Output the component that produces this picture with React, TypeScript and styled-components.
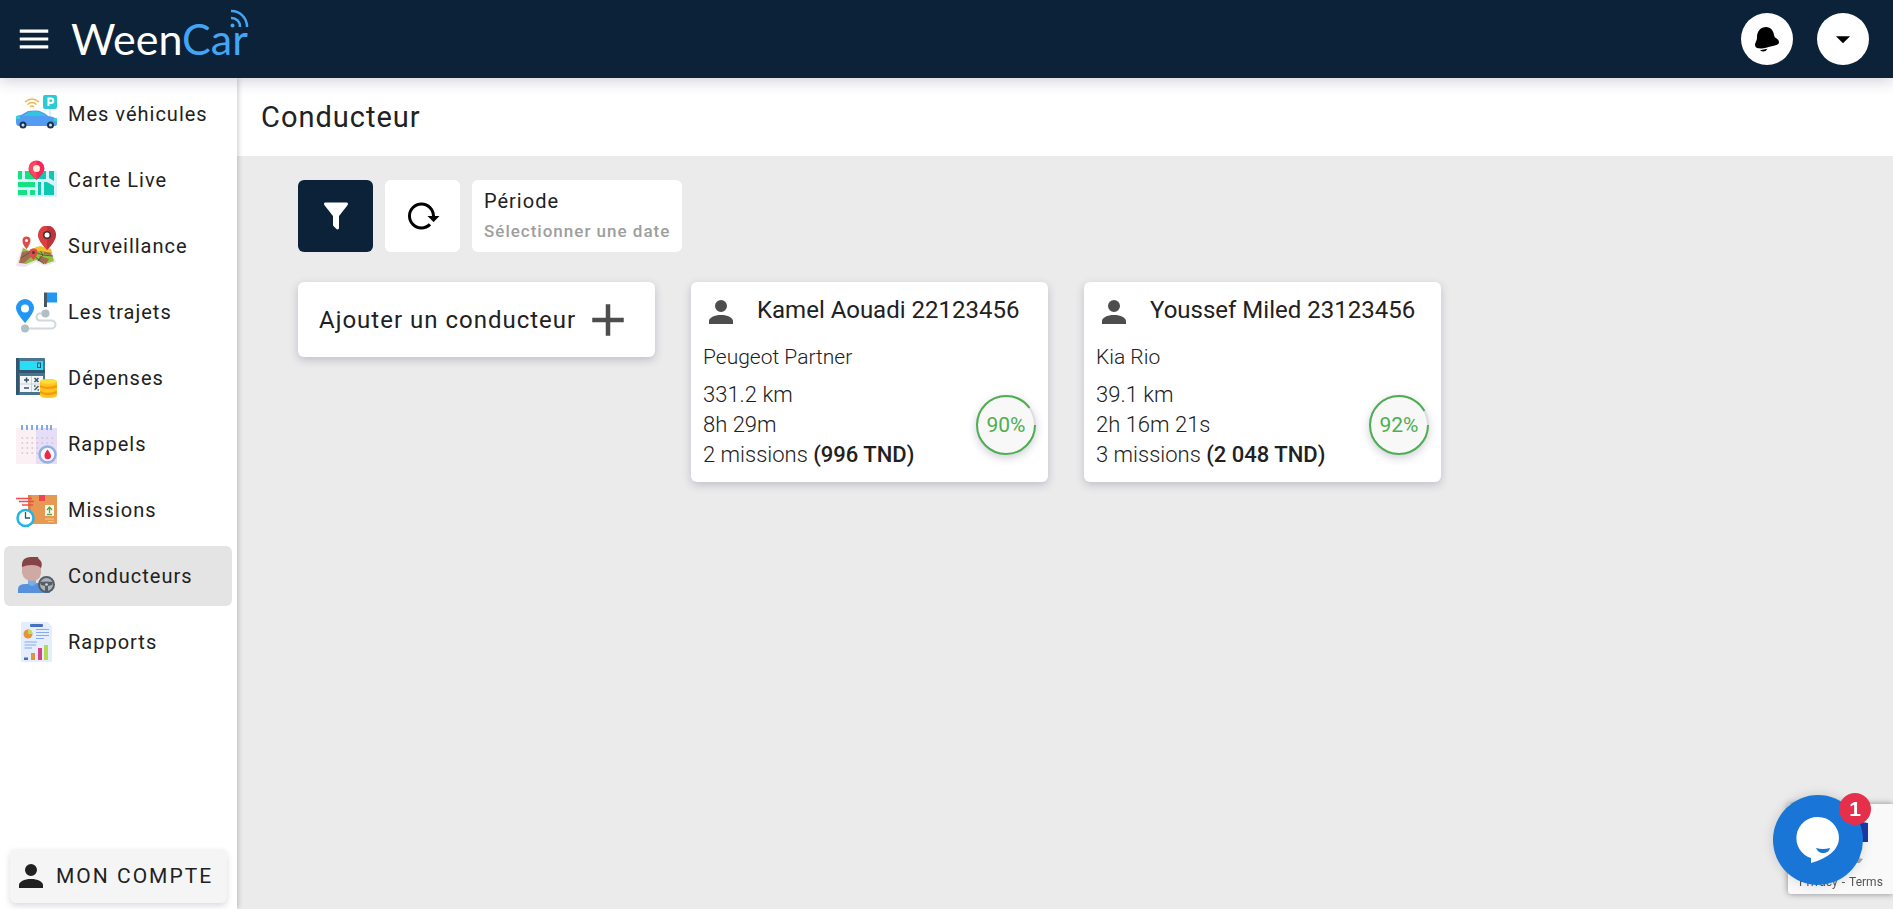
import React from "react";
import styled, { createGlobalStyle } from "styled-components";

const GlobalStyle = createGlobalStyle`
  *, *::before, *::after { box-sizing: border-box; }
  body { margin: 0; background: #ebebeb; color: #212121; font-family: Roboto, "Liberation Sans", sans-serif; }
  button { font: inherit; color: inherit; border: 0; padding: 0; cursor: pointer; letter-spacing: inherit; }
  a { color: inherit; text-decoration: none; }
  h1, h2, p, ul { margin: 0; padding: 0; }
  ul { list-style: none; }
  svg { display: block; flex: none; }
`;

const Page = styled.div`
  min-height: 100vh;
  display: flex;
  flex-direction: column;
`;

const Header = styled.header`
  height: 78px;
  flex: none;
  display: flex;
  align-items: center;
  padding: 0 24px 0 15px;
  background: #0c2238;
  color: #fff;
  box-shadow: 0 3px 14px rgba(60, 50, 100, 0.24);
  z-index: 3;
`;

const MenuButton = styled.button`
  background: none;
  margin-right: 18px;
`;

const Logo = styled.a`
  display: flex;
  align-items: center;
`;

const HeaderActions = styled.div`
  display: flex;
  gap: 24px;
  margin-left: auto;
`;

const RoundButton = styled.button`
  width: 52px;
  height: 52px;
  border-radius: 50%;
  background: #fff;
  color: #000;
  display: flex;
  align-items: center;
  justify-content: center;
`;

const Body = styled.div`
  flex: 1;
  display: flex;
`;

const Sidebar = styled.nav`
  width: 237px;
  flex: none;
  display: flex;
  flex-direction: column;
  justify-content: space-between;
  padding: 6px 5px 6px 4px;
  background: #fff;
  box-shadow: 1px 0 5px rgba(0, 0, 0, 0.22);
  z-index: 2;
`;

const NavList = styled.ul`
  display: flex;
  flex-direction: column;
  gap: 6px;
`;

const NavLink = styled.a<{ $active?: boolean }>`
  display: flex;
  align-items: center;
  gap: 11px;
  height: 60px;
  padding: 0 12px;
  border-radius: 6px;
  font-size: 20px;
  letter-spacing: 1px;
  background: ${(p) => (p.$active ? "#e4e4e4" : "transparent")};
`;

const AccountButton = styled.button`
  display: flex;
  align-items: center;
  gap: 7px;
  height: 54px;
  margin: 0 5px 0 6px;
  padding-left: 3px;
  border-radius: 6px;
  background: #f5f5f5;
  font-size: 21px;
  letter-spacing: 2px;
  box-shadow: 0 3px 6px rgba(60, 50, 100, 0.18);
`;

const Main = styled.main`
  flex: 1;
  min-width: 0;
`;

const TitleBar = styled.div`
  height: 78px;
  display: flex;
  align-items: center;
  padding: 0 24px;
  background: #fff;
`;

const Title = styled.h1`
  font-size: 29px;
  line-height: 36px;
  font-weight: 400;
  letter-spacing: 1px;
`;

const Content = styled.div`
  padding: 24px 61px;
`;

const Toolbar = styled.div`
  display: flex;
  gap: 12px;
  margin-bottom: 30px;
`;

const ToolButton = styled.button<{ $dark?: boolean }>`
  width: 75px;
  height: 72px;
  display: flex;
  align-items: center;
  justify-content: center;
  border-radius: 6px;
  background: ${(p) => (p.$dark ? "#0c2238" : "#fff")};
  color: ${(p) => (p.$dark ? "#fff" : "#000")};
`;

const PeriodButton = styled.button`
  height: 72px;
  padding: 0 12px;
  border-radius: 6px;
  background: #fff;
  text-align: left;
  font-size: 20px;
  line-height: 30px;
  letter-spacing: 1px;
`;

const PeriodHint = styled.span`
  display: block;
  color: #9e9e9e;
  font-size: 17px;
  font-weight: 500;
`;

const Cards = styled.div`
  display: flex;
  flex-wrap: wrap;
  align-items: flex-start;
  gap: 36px;
`;

const Card = styled.article`
  width: 357px;
  border-radius: 6px;
  background: #fff;
  box-shadow: 0 3px 8px rgba(60, 50, 100, 0.24);
  padding: 9px 12px 12px;
`;

const AddCard = styled.button`
  width: 357px;
  height: 75px;
  display: flex;
  align-items: center;
  gap: 5px;
  padding: 0 21px;
  border-radius: 6px;
  background: #fff;
  box-shadow: 0 3px 8px rgba(60, 50, 100, 0.24);
  font-size: 24px;
  letter-spacing: 1px;
  white-space: nowrap;
`;

const CardHead = styled.header`
  display: flex;
  align-items: center;
  gap: 18px;
  height: 42px;
`;

const DriverName = styled.h2`
  padding-bottom: 4px;
  font-size: 24px;
  line-height: 36px;
  font-weight: 400;
  white-space: nowrap;
`;

const Vehicle = styled.p`
  margin: 9px 0 8px;
  font-size: 21px;
  line-height: 30px;
  font-weight: 300;
`;

const CardBody = styled.div`
  display: flex;
  align-items: center;
  justify-content: space-between;
`;

const Stats = styled.div`
  font-size: 22px;
  line-height: 30px;
  font-weight: 300;

  strong { font-weight: 500; }
`;

const Ring = styled.div`
  position: relative;
  width: 60px;
  height: 60px;
  display: flex;
  align-items: center;
  justify-content: center;
  border-radius: 50%;
  background: #f8f8f8;
  color: #4caf50;
  font-size: 21px;
  box-shadow: 0 3px 8px rgba(60, 50, 100, 0.24);

  svg { position: absolute; inset: 0; }
`;

const Recaptcha = styled.aside`
  position: fixed;
  right: 0;
  bottom: 15px;
  width: 105px;
  height: 90px;
  display: flex;
  align-items: flex-end;
  padding: 0 0 4px 11px;
  border-radius: 3px 0 0 3px;
  background: #f9f9f9;
  box-shadow: 0 0 6px #888;
  color: #555;
  font-size: 12px;
  line-height: 16px;
  z-index: 4;

  svg { position: absolute; left: 50px; top: 15px; }
`;

const RecaptchaLinks = styled.div`
  display: flex;
  gap: 4px;
`;

const ChatButton = styled.button`
  position: fixed;
  right: 30px;
  bottom: 24px;
  width: 90px;
  height: 90px;
  border-radius: 50%;
  background: #1976d6;
  box-shadow: 0 0 12px rgba(0, 0, 0, 0.15);
  z-index: 5;
`;

const ChatBadge = styled.span`
  position: absolute;
  right: -8px;
  top: -2px;
  width: 32px;
  height: 32px;
  border-radius: 50%;
  background: #e62f4a;
  color: #fff;
  font: bold 21px/32px "Liberation Sans", sans-serif;
  letter-spacing: 0;
`;

const GLYPHS = {
  menu: "M3,6H21V8H3V6M3,11H21V13H3V11M3,16H21V18H3V16Z",
  down: "M7,10L12,15L17,10H7Z",
  filter:
    "M14,12V19.88C14.04,20.18 13.94,20.5 13.71,20.71C13.32,21.1 12.69,21.1 12.3,20.71L10.29,18.7C10.06,18.47 9.96,18.16 10,17.87V12H9.97L4.21,4.62C3.87,4.19 3.95,3.56 4.38,3.22C4.57,3.08 4.78,3 5,3H19C19.22,3 19.43,3.08 19.62,3.22C20.05,3.56 20.13,4.19 19.79,4.62L14.03,12H14Z",
  reload:
    "M2 12C2 16.97 6.03 21 11 21C13.39 21 15.68 20.06 17.4 18.4L15.9 16.9C14.63 18.25 12.86 19 11 19C4.76 19 1.64 11.46 6.05 7.05C10.46 2.64 18 5.77 18 12H15L19 16H19.1L23 12H20C20 7.03 15.97 3 11 3C6.03 3 2 7.03 2 12Z",
  account:
    "M12,4A4,4 0 0,1 16,8A4,4 0 0,1 12,12A4,4 0 0,1 8,8A4,4 0 0,1 12,4M12,14C16.42,14 20,15.79 20,18V20H4V18C4,15.79 7.58,14 12,14Z",
  plus: "M19,13H13V19H11V13H5V11H11V5H13V11H19V13Z",
};

function Glyph({ name, size = 36, color = "currentColor" }: { name: keyof typeof GLYPHS; size?: number; color?: string }) {
  return (
    <svg width={size} height={size} viewBox="0 0 24 24" fill={color} aria-hidden="true">
      <path d={GLYPHS[name]} />
    </svg>
  );
}

function WeenCarLogo() {
  return (
    <svg width="180" height="60" viewBox="0 0 180 60" role="img" aria-label="WeenCar">
      <text x="0" y="46" fontFamily="Lato, sans-serif" fontSize="43" fill="#fff">
        Ween<tspan fill="#42a5f5">Car</tspan>
      </text>
      <g fill="none" stroke="#42a5f5" strokeWidth="2.500">
        <path d="M160 2A15.500 15.500 0 0 1 176 18" />
        <path d="M160 9A8.500 8.500 0 0 1 169 18" />
      </g>
      <circle cx="161.500" cy="16.500" r="2" fill="#42a5f5" />
    </svg>
  );
}

function Bell() {
  return (
    <svg width="26" height="26" viewBox="0 0 26 26" aria-hidden="true">
      <path d="M3 11C3 5 7 1 12 1C17 1 19.500 5 20 9C20.500 13 25 12 25 16.500C25 19 20 19.500 13 21.500C8 23 2 23 1.200 20C.500 16.500 3 16 3 11Z" />
      <path d="M6 24.200Q10 23.800 13.500 22.800Q12 25.600 9.500 25.600Q7.500 25.600 6 24.200Z" />
    </svg>
  );
}

const ICONS: Record<string, React.ReactNode> = {
  vehicles: (
    <>
      <path d="M34 12V29" stroke="#b9d9f5" />
      <rect x="27" y="1" width="14" height="14" rx="2" fill="#2ccbd3" />
      <path d="M32.500 12V4.500H35a2 2 0 0 1 0 4.500H32.500" fill="none" stroke="#fff" strokeWidth="2" />
      <path d="M9 8Q16 2 23 8M11.500 10.500Q16 6.500 20.500 10.500M14 13Q16 11 18 13" fill="none" stroke="#f3b54a" strokeWidth="1.300" />
      <path d="M0 24Q0 21 5 21L11 17.500Q13 16.500 20 16.500Q26 16.500 32 22Q41 23 41 27V30Q41 32 38 32H3Q0 32 0 28Z" fill="#549bf2" />
      <path d="M7 22L12 18.500Q14 17.500 20 17.500Q25 17.500 30 22Z" fill="#32c6dd" />
      <path d="M0 22H4V25H0ZM38 24H41V27H38Z" fill="#3ad0df" />
      <circle cx="7" cy="31" r="3.500" fill="#17364d" /><circle cx="34.500" cy="31" r="3.500" fill="#17364d" />
      <circle cx="7" cy="31" r="1.500" fill="#cfe0ea" /><circle cx="34.500" cy="31" r="1.500" fill="#cfe0ea" />
    </>
  ),
  live: (
    <>
      <path d="M2 11H41V37H2Z" fill="#d9f2fb" />
      <path d="M2 11H6V19H2ZM9 11H19V19H9ZM2 22H19V27H2ZM2 30H11V35H2ZM14 30H19V35H14Z" fill="#12e27f" />
      <path d="M22 19V11H30V19ZM33 11H38V21L33 18ZM22 22H25V35H22ZM28 22H31L38 26V35H28Z" fill="#0dc9b4" />
      <path d="M20.500 20Q12 13 12.500 8.500A8 8 0 0 1 28.500 8.500Q28 14 20.500 20Z" fill="#f5285c" />
      <path d="M20.500 1A7.500 7.500 0 0 0 13 8.500Q14 14 20.500 19Z" fill="#fb4763" />
      <circle cx="20.500" cy="8.500" r="3.500" fill="#fff1d8" />
    </>
  ),
  surveillance: (
    <>
      <path d="M0 40L6 21L13 24L22 20L35 23L40 36L29 40L20 36L9 41Z" fill="#eee4ee" />
      <path d="M3 37L7 22L13 25L22 21L34 23L38 35L29 38L20 34L10 38Z" fill="#8fc23c" />
      <path d="M3 37L6 26L13 25L15 31L8 37ZM27 22L34 23L35 29L28 28ZM22 34L24 30L33 33L30 38Z" fill="#a56a52" />
      <path d="M5 32L16 25L27 29L37 30M13 25L18 30L28 38M22 21L27 29L22 35" fill="none" stroke="#5c5a46" />
      <path d="M13 24L25 25L36 27L35 23L24 20Z" fill="#f5bc2e" />
      <path d="M10.500 23Q6 18 6.500 14.500A4 4 0 0 1 14.500 14.500Q14.500 18 10.500 23Z" fill="#dc4d49" />
      <path d="M17.500 34Q13 29.500 13.500 26.500A4 4 0 0 1 21.500 26.500Q21.500 29.500 17.500 34Z" fill="#dc4d49" />
      <path d="M31 24Q21 14 22 8.500A9 9 0 0 1 40 8.500Q40 15 31 24Z" fill="#db403f" />
      <path d="M31 24Q40 15 40 8.500A9 9 0 0 0 31 0Z" fill="#bd3439" />
      <circle cx="31" cy="9" r="4" fill="#3d3034" /><circle cx="31" cy="9" r="2.500" fill="#fff" />
      <circle cx="10.500" cy="14.500" r="1.500" fill="#fff" /><circle cx="17.500" cy="26.500" r="1.500" fill="#60303a" />
    </>
  ),
  trips: (
    <>
      <path d="M9 36.500H35.500A4 4 0 0 0 35.500 28.500H23A3.700 3.700 0 0 1 23 21.500H29" fill="none" stroke="#cfd8dc" strokeWidth="2" />
      <circle cx="9" cy="36.500" r="4" fill="#b0bec5" /><circle cx="29.500" cy="21.500" r="4" fill="#b0bec5" />
      <path d="M9 31Q0 21 0 16A9 9 0 0 1 18 16Q18 21 9 31Z" fill="#2196f3" />
      <circle cx="9" cy="16.500" r="4" fill="#fff" />
      <path d="M28 .500H31V15H28Z" fill="#455a64" /><path d="M31 .500H41V10.500H31Z" fill="#2196f3" />
    </>
  ),
  expenses: (
    <>
      <rect x="0" y="0" width="29" height="37" rx="1" fill="#477693" />
      <path d="M0 0H3V37H0ZM0 12H29V15H0Z" fill="#31566e" />
      <path d="M4 3H27V12H4Z" fill="#2bdcf7" />
      <rect x="21.500" y="5" width="3" height="4.500" fill="none" stroke="#285069" />
      <path d="M4 18H27V34H4Z" fill="#f3f5f7" />
      <path d="M15.500 18V34M4 26H27" stroke="#c5d4dd" />
      <path d="M8 22H13M10.500 19.500V24.500M8 30H13M18.500 20L22.500 24M22.500 20L18.500 24M18.500 32L22.500 28M18 28H19.500M21.500 32H23" stroke="#37546b" strokeWidth="1.500" fill="none" />
      <path d="M24 24Q24 21 32.500 21T41 24V37Q41 40 32.500 40T24 37Z" fill="#fec51c" />
      <path d="M24 28Q32 32 41 28M24 34Q32 38 41 34" fill="none" stroke="#f59b13" strokeWidth="2.500" />
      <ellipse cx="32.500" cy="23.500" rx="8" ry="2.500" fill="#ffdc38" />
    </>
  ),
  reminders: (
    <>
      <path d="M0 4H41V40H0Z" fill="#fbf0f3" /><path d="M20 4H41V40H20Z" fill="#e5def6" />
      <path d="M5.500 14H38M5.500 19H38M5.500 24H38M5.500 29H30" stroke="#d6bed5" strokeWidth="1.600" strokeDasharray="1.600 3.400" />
      <path d="M6 1V6M11 1V6M16 1V6M21 1V6M26 1V6M31 1V6M35 1V6" stroke="#7fa8ed" strokeWidth="2" />
      <circle cx="31.500" cy="30.500" r="8" fill="#fff8fb" stroke="#8cb1e9" strokeWidth="2.500" />
      <path d="M31.500 25.500Q28 30 28.500 32A3.200 3.200 0 0 0 35 32Q35 30 31.500 25.500Z" fill="#ed284b" />
    </>
  ),
  missions: (
    <>
      <path d="M12 5H41V34H12Z" fill="#e79853" /><path d="M12 5H15V34H12Z" fill="#d88542" />
      <path d="M23 5H29V11H23Z" fill="#ee4550" />
      <path d="M0 8.500H16M3 11.500H18M6 15H17" stroke="#f2494e" strokeWidth="1.300" />
      <path d="M29 15H38V26H29Z" fill="#f8faee" /><path d="M31 20L33.500 17L36 20M33.500 17V23M31 24.500H36" fill="none" stroke="#55a944" strokeWidth="1.300" />
      <path d="M29 29H38M32 31.500H38" stroke="#ffc78c" />
      <circle cx="9.500" cy="28" r="8" fill="#fff" stroke="#20b4ea" strokeWidth="2.500" />
      <path d="M9.500 22V28H14" fill="none" stroke="#38566a" strokeWidth="1.300" />
    </>
  ),
  drivers: (
    <>
      <path d="M2 37V33Q2 28 10 28L22 27Q34 28 34 37Z" fill="#5790dc" />
      <path d="M12 23H20V28Q16 32 12 28Z" fill="#75afe8" />
      <path d="M6 8H25V17Q24 25 16 25Q8 25 6 17Z" fill="#cfaaa4" />
      <path d="M6 11Q5 1 15 1H22Q22 3 24 4Q27 7 25 12Q22 9 16 9Q10 9 6 11Z" fill="#864447" />
      <circle cx="30.500" cy="28.500" r="7.500" fill="#a9b4bd" stroke="#565e64" strokeWidth="2" />
      <path d="M24 26Q30 25 37 26L36 29L32 30V35H29V30L25 29Z" fill="#565e64" /><circle cx="30.500" cy="28.500" r="1.300" fill="#ddd" />
    </>
  ),
  reports: (
    <>
      <path d="M5 0H31L36 4V40H5Z" fill="#e4eefc" />
      <rect x="14" y="2" width="13" height="3" rx="1" fill="#4770c3" />
      <circle cx="12" cy="12" r="4.500" fill="#e59539" /><path d="M12 12V7.500A4.500 4.500 0 0 1 16.500 12Z" fill="#c4d85c" />
      <path d="M20 7.500H33M20 10.500H33M20 13.500H33M20 16.500H28M8.500 20H21M8.500 23H20M8.500 26H16" stroke="#83aaf2" />
      <path d="M8 35.500H12V38H8Z" fill="#416ec4" /><path d="M15 31H19V38H15Z" fill="#e3933d" />
      <path d="M22 26H26V38H22Z" fill="#d9408b" /><path d="M28 23H32V38H28Z" fill="#b4db4f" />
    </>
  ),
};

const NAV = [
  { icon: "vehicles", label: "Mes véhicules" },
  { icon: "live", label: "Carte Live" },
  { icon: "surveillance", label: "Surveillance" },
  { icon: "trips", label: "Les trajets" },
  { icon: "expenses", label: "Dépenses" },
  { icon: "reminders", label: "Rappels" },
  { icon: "missions", label: "Missions" },
  { icon: "drivers", label: "Conducteurs", active: true },
  { icon: "reports", label: "Rapports" },
];

const DRIVERS = [
  { name: "Kamel Aouadi 22123456", vehicle: "Peugeot Partner", distance: "331.2 km", time: "8h 29m", missions: "2 missions", amount: "(996 TND)", score: 90 },
  { name: "Youssef Miled 23123456", vehicle: "Kia Rio", distance: "39.1 km", time: "2h 16m 21s", missions: "3 missions", amount: "(2 048 TND)", score: 92 },
];

function ScoreRing({ score }: { score: number }) {
  return (
    <Ring>
      <svg width="60" height="60" viewBox="0 0 60 60" fill="none" strokeWidth="2" aria-hidden="true">
        <circle cx="30" cy="30" r="29" stroke="#ddd" />
        <circle cx="30" cy="30" r="29" stroke="#4caf50" pathLength="100" strokeDasharray={`${score} 100`} />
      </svg>
      {score}%
    </Ring>
  );
}

export default function App() {
  return (
    <Page>
      <GlobalStyle />
      <Header>
        <MenuButton aria-label="Menu"><Glyph name="menu" size={38} /></MenuButton>
        <Logo href="#"><WeenCarLogo /></Logo>
        <HeaderActions>
          <RoundButton aria-label="Notifications"><Bell /></RoundButton>
          <RoundButton aria-label="Options"><Glyph name="down" size={34} /></RoundButton>
        </HeaderActions>
      </Header>
      <Body>
        <Sidebar>
          <NavList>
            {NAV.map((item) => (
              <li key={item.icon}>
                <NavLink href="#" $active={item.active}>
                  <svg width="41" height="41" viewBox="0 0 41 41" aria-hidden="true">{ICONS[item.icon]}</svg>
                  {item.label}
                </NavLink>
              </li>
            ))}
          </NavList>
          <AccountButton><Glyph name="account" />MON COMPTE</AccountButton>
        </Sidebar>
        <Main>
          <TitleBar><Title>Conducteur</Title></TitleBar>
          <Content>
            <Toolbar>
              <ToolButton $dark aria-label="Filtrer"><Glyph name="filter" /></ToolButton>
              <ToolButton aria-label="Actualiser"><Glyph name="reload" /></ToolButton>
              <PeriodButton>Période<PeriodHint>Sélectionner une date</PeriodHint></PeriodButton>
            </Toolbar>
            <Cards>
              <AddCard>Ajouter un conducteur<Glyph name="plus" size={54} color="#4d4d4d" /></AddCard>
              {DRIVERS.map((d) => (
                <Card key={d.name}>
                  <CardHead>
                    <Glyph name="account" color="#4d4d4d" />
                    <DriverName>{d.name}</DriverName>
                  </CardHead>
                  <Vehicle>{d.vehicle}</Vehicle>
                  <CardBody>
                    <Stats>
                      <p>{d.distance}</p>
                      <p>{d.time}</p>
                      <p>{d.missions} <strong>{d.amount}</strong></p>
                    </Stats>
                    <ScoreRing score={d.score} />
                  </CardBody>
                </Card>
              ))}
            </Cards>
          </Content>
        </Main>
      </Body>
      <Recaptcha>
        <svg width="36" height="44" viewBox="0 0 36 44" aria-hidden="true">
          <path d="M18 2L30 4V23H18Z" fill="#1c3aa9" />
          <path d="M16 38L25 40L20 46Z" fill="#ababab" />
        </svg>
        <RecaptchaLinks><a href="#">Privacy</a><span>-</span><a href="#">Terms</a></RecaptchaLinks>
      </Recaptcha>
      <ChatButton aria-label="Chat">
        <svg width="90" height="90" viewBox="0 0 90 90" aria-hidden="true">
          <path d="M45 22A21 21 0 0 1 66 43C66 54 56 63 38 68V63A21 21 0 0 1 45 22Z" fill="#fff" />
          <path d="M43 53Q50 55 57 53Q56 58 50 58Q45 58 43 53Z" fill="#1976d6" />
        </svg>
        <ChatBadge>1</ChatBadge>
      </ChatButton>
    </Page>
  );
}
